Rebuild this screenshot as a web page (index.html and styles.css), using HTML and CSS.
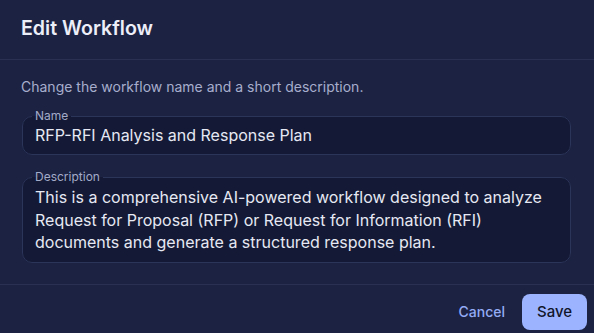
FILE: index.html
```html
<!DOCTYPE html>
<html lang="en">
<head>
  <meta charset="UTF-8">
  <meta name="viewport" content="width=device-width, initial-scale=1.0">
  <title>Edit Workflow</title>
  <link rel="stylesheet" href="styles.css">
</head>
<body>
  <div class="dialog">
    <!-- Header -->
    <div class="dialog-header">
      <h2>Edit Workflow</h2>
    </div>

    <!-- Form -->
    <div class="dialog-content">
      <p class="hint">Change the workflow name and a short description.</p>

      <fieldset class="field">
        <legend>Name</legend>
        <input type="text" id="name" value="RFP-RFI Analysis and Response Plan">
      </fieldset>

      <fieldset class="field field-multi">
        <legend>Description</legend>
        <textarea id="description" rows="3">This is a comprehensive AI-powered workflow designed to analyze Request for Proposal (RFP) or Request for Information (RFI) documents and generate a structured response plan.</textarea>
      </fieldset>
    </div>

    <!-- Actions -->
    <div class="dialog-actions">
      <button class="btn-text">Cancel</button>
      <button class="btn-primary">Save</button>
    </div>
  </div>
</body>
</html>
```

FILE: styles.css
```css
html, body {
  margin: 0;
  height: 100%;
}
body {
  font-family: Inter, "Noto Sans", sans-serif;
  background-color: #1c2242;
  color: #e6e8f3;
}
.dialog {
  display: flex;
  flex-direction: column;
  height: 100%;
}
.dialog-header {
  height: 59px;
  padding: 0 21px;
  display: flex;
  align-items: center;
  border-bottom: 1px solid #293052;
}
.dialog-header h2 {
  margin: 0;
  margin-top: -4px;
  font-size: 19.6px;
  font-weight: 600;
  color: #eceef8;
}
.dialog-content {
  padding: 0 23px 21px 21px;
}
.hint {
  margin: 18px 0 13px;
  font-size: 14px;
  line-height: 18px;
  color: #a7aecd;
}
.field {
  margin: 0 0 0 1px;
  padding: 0 12px 8px;
  border: 1px solid #2b3459;
  border-radius: 10px;
  background-color: #141a35;
}
.field + .field {
  margin-top: 15px;
}
.field legend {
  margin-left: -3px;
  padding: 0 3px;
  font-size: 12px;
  line-height: 14px;
  color: #a3abc9;
}
.field input, .field textarea {
  display: block;
  width: 100%;
  margin: 0;
  padding: 0;
  border: none;
  outline: none;
  background: transparent;
  color: #e6e8f3;
  font-family: inherit;
  font-size: 16px;
}
.field input {
  height: 22px;
  margin-top: 1px;
}
.field textarea {
  margin-top: 2px;
  line-height: 22.5px;
  height: 67.5px;
  resize: none;
  overflow: hidden;
}
.dialog-actions {
  flex: 1;
  display: flex;
  justify-content: flex-end;
  align-items: flex-start;
  gap: 8px;
  padding: 9px 7px 0;
  border-top: 1px solid #293052;
}
.dialog-actions button {
  height: 36px;
  padding: 0 9px;
  border: none;
  border-radius: 8px;
  font-family: inherit;
  font-size: 15px;
  font-weight: 500;
  cursor: pointer;
}
.btn-text {
  background: transparent;
  color: #93acf5;
  font-size: 14px !important;
}
.btn-primary {
  width: 65px;
  background-color: #9cb4ff;
  color: #12162b;
}
```
